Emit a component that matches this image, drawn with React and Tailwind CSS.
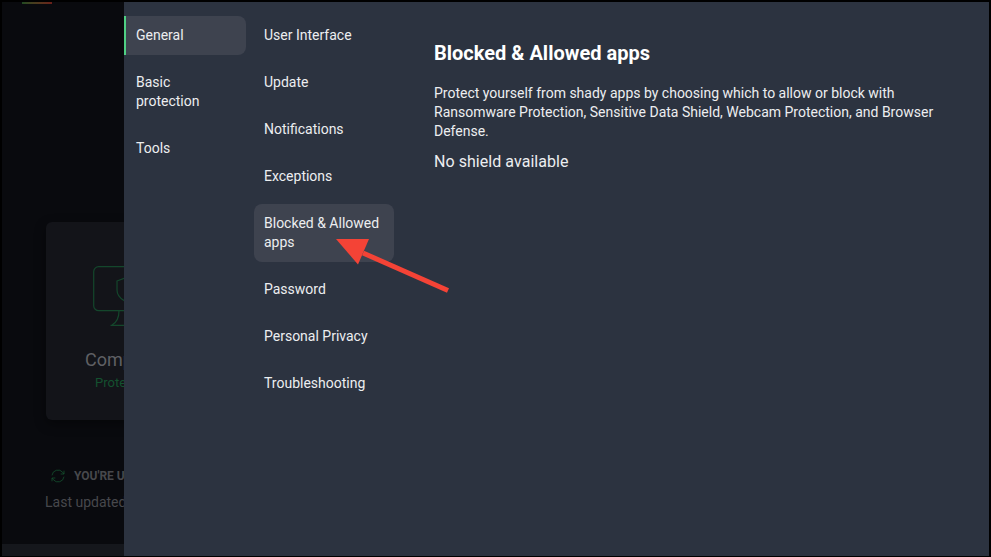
const sections = [
  { label: "General", active: true },
  { label: "Basic protection" },
  { label: "Tools" },
];

const items = [
  { label: "User Interface" },
  { label: "Update" },
  { label: "Notifications" },
  { label: "Exceptions" },
  { label: "Blocked & Allowed apps", active: true },
  { label: "Password" },
  { label: "Personal Privacy" },
  { label: "Troubleshooting" },
];

function Background() {
  return (
    <div className="w-[122px] shrink-0 overflow-hidden bg-[#090a0e] flex flex-col">
      <div className="h-[2px] w-[30px] ml-[20px] bg-gradient-to-r from-[#1f4a22] to-[#6b1f1a]" />
      <div className="flex-1 min-h-0 w-[400px] pl-[44px] pt-[218px]">
        <div className="w-[300px] h-[198px] rounded-[6px] bg-[#131419] shadow-[0_4px_12px_rgba(0,0,0,0.4)] pl-[47px] pt-[44px]">
          <svg width="80" height="62" viewBox="0 0 80 62" fill="none" stroke="#14472c" strokeWidth="1.2">
            <rect x="0.7" y="0.7" width="60" height="44" rx="5" />
            <path d="M26 44.7c0 6-1 11-7 14.3M17.5 59.3h30" />
            <path d="M24 15l8-3 8 3v9c0 6-4 9-8 11-4-2-8-5-8-11z" />
          </svg>
          <div className="mt-[20px] -ml-[8px] text-[18px] leading-[24px] text-[#5f6064]">Computer</div>
          <div className="mt-[2px] ml-[2px] text-[13px] leading-[18px] text-[#14512f]">Protected</div>
        </div>
        <div className="mt-[48px] flex items-center gap-[8px] pl-[6px]">
          <svg width="16" height="16" viewBox="0 0 24 24" fill="none" stroke="#14512f" strokeWidth="1.2" className="shrink-0 -ml-[2px]">
            <path d="M3 11a9 9 0 0 1 16-4.5L21 9M21 13a9 9 0 0 1-16 4.5L3 15" />
            <path d="M21 4v5h-5M3 20v-5h5" />
          </svg>
          <span className="text-[12px] leading-[16px] font-bold text-[#47484c]">YOU'RE UP TO DATE</span>
        </div>
        <div className="mt-[9px] -ml-[1px] text-[14px] leading-[18px] text-[#47484c]">Last updated</div>
      </div>
      <div className="h-[12px] shrink-0 bg-[#15171c]" />
    </div>
  );
}

export default function App() {
  return (
    <div className="relative w-[991px] h-[557px] overflow-hidden bg-black pt-[2px] pl-[2px] pr-[2px] pb-[1px] flex font-[Roboto,sans-serif]">
      <Background />
      <div className="flex-1 flex bg-[#2c3340] pt-[14px]">
        <nav className="w-[122px] shrink-0 flex flex-col gap-[8px]">
          {sections.map((s) => (
            <div
              key={s.label}
              className={
                s.active
                  ? "py-[10px] pl-[10px] pr-[10px] border-l-2 border-[#4fd084] rounded-r-[8px] bg-[#3e434f] text-[14px] leading-[19px] text-[#eceef0]"
                  : "py-[10px] pl-[12px] pr-[10px] text-[14px] leading-[19px] text-[#eceef0]"
              }
            >
              {s.label}
            </div>
          ))}
        </nav>
        <nav className="w-[140px] ml-[8px] shrink-0 flex flex-col gap-[8px]">
          {items.map((s) => (
            <div
              key={s.label}
              className={
                s.active
                  ? "py-[10px] px-[10px] rounded-[8px] bg-[#3e434f] text-[14px] leading-[19px] text-[#eceef0]"
                  : "py-[10px] px-[10px] text-[14px] leading-[19px] text-[#eceef0]"
              }
            >
              {s.label}
            </div>
          ))}
        </nav>
        <main className="ml-[40px] w-[510px] pt-[25px] text-[#eceef0]">
          <h1 className="text-[20px] leading-[24px] font-bold text-white">Blocked &amp; Allowed apps</h1>
          <p className="mt-[19px] text-[14px] leading-[19px]">
            Protect yourself from shady apps by choosing which to allow or block with Ransomware Protection, Sensitive Data Shield, Webcam Protection, and Browser Defense.
          </p>
          <div className="mt-[10px] text-[16px] leading-[22px] font-normal tracking-[0.05px]">No shield available</div>
        </main>
      </div>
      <svg className="absolute left-[335px] top-[236px]" width="120" height="65" viewBox="0 0 120 65" fill="none">
        <path d="M113 54.5L28 17" stroke="#f44336" strokeWidth="5" />
        <path d="M1 3L34 3L23 28.5Z" fill="#f44336" />
      </svg>
    </div>
  );
}
